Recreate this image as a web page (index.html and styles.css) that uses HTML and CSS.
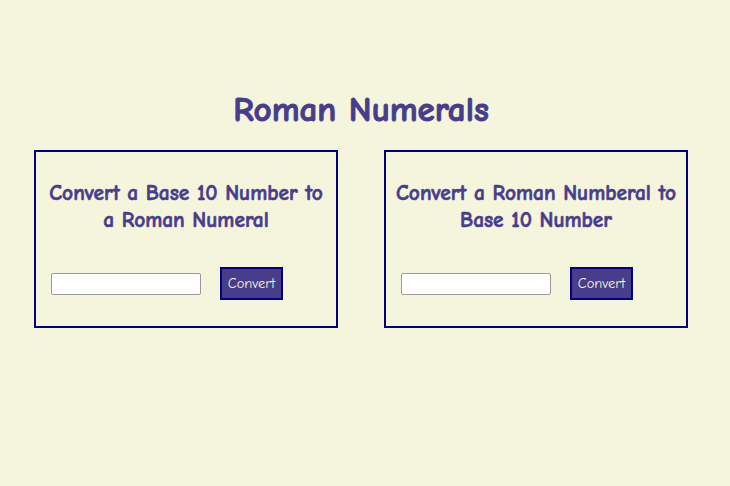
FILE: index.html
```html
<!DOCTYPE html>
<html>
<head>
<meta charset="utf-8">
<title>Roman Numerals</title>
<link rel="stylesheet" href="styles.css">
</head>
<body>
<div class="page">
  <h1 class="title">Roman Numerals</h1>
  <div class="cards">
    <section class="card">
      <h2 class="card-title">Convert a Base 10 Number to a Roman Numeral</h2>
      <div class="row">
        <input class="field" type="text">
        <button class="btn">Convert</button>
      </div>
    </section>
    <section class="card">
      <h2 class="card-title">Convert a Roman Numberal to Base 10 Number</h2>
      <div class="row">
        <input class="field" type="text">
        <button class="btn">Convert</button>
      </div>
    </section>
  </div>
</div>
</body>
</html>
```
FILE: styles.css
```css
html, body {
  margin: 0;
  padding: 0;
  background: #f5f4dc;
}
body {
  font-family: "Comic Sans MS", "Comic Neue", "DejaVu Sans", sans-serif;
  color: #483d8b;
}
.page {
  width: 654px;
  margin-left: 34px;
  padding-top: 90px;
}
.title {
  margin: 0;
  height: 60px;
  font-size: 35px;
  line-height: 40px;
  font-weight: bold;
  -webkit-text-stroke: 1px #483d8b;
  text-align: center;
  color: #483d8b;
}
.cards {
  display: flex;
  gap: 46px;
}
.card {
  width: 300px;
  height: 174px;
  border: 2px solid #000080;
  display: flex;
  flex-direction: column;
  align-items: center;
}
.card-title {
  margin: 28px 6px 0;
  font-size: 21.4px;
  line-height: 27px;
  font-weight: bold;
  -webkit-text-stroke: 0.6px #483d8b;
  text-align: center;
  color: #483d8b;
}
.row {
  align-self: stretch;
  display: flex;
  align-items: center;
  gap: 19px;
  padding-left: 15px;
  margin-top: 33px;
}
.field {
  box-sizing: border-box;
  width: 150px;
  height: 22px;
  margin: 0;
  border: 1px solid #999;
  border-radius: 2px;
  background: #fff;
}
.btn {
  box-sizing: border-box;
  height: 33px;
  width: 63px;
  padding: 0;
  background: #483d8b;
  border: 2px solid #000080;
  color: #f5f4dc;
  font-family: "Comic Sans MS", "Comic Neue", "DejaVu Sans", sans-serif;
  font-size: 14.5px;
}
```
